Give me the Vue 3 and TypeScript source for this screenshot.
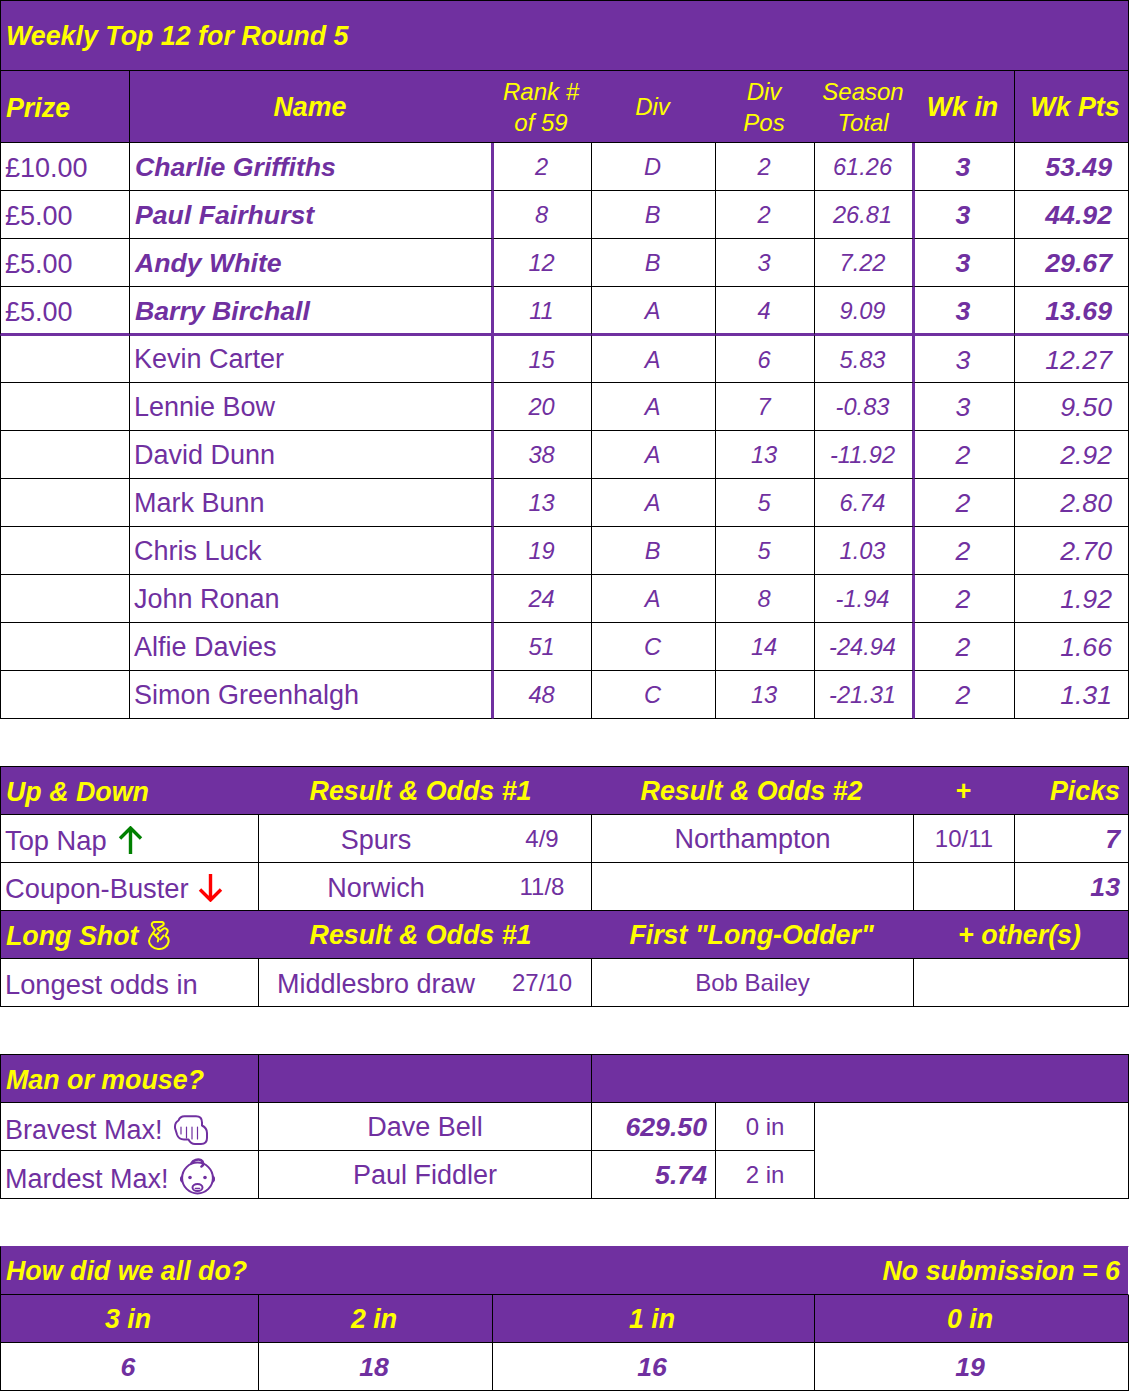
<script setup lang="ts">
interface Row { prize: string; name: string; rank: number; div: string; pos: number; total: string; wk: number; pts: string }
const rows: Row[] = [
  { prize: '£10.00', name: 'Charlie Griffiths', rank: 2, div: 'D', pos: 2, total: '61.26', wk: 3, pts: '53.49' },
  { prize: '£5.00', name: 'Paul Fairhurst', rank: 8, div: 'B', pos: 2, total: '26.81', wk: 3, pts: '44.92' },
  { prize: '£5.00', name: 'Andy White', rank: 12, div: 'B', pos: 3, total: '7.22', wk: 3, pts: '29.67' },
  { prize: '£5.00', name: 'Barry Birchall', rank: 11, div: 'A', pos: 4, total: '9.09', wk: 3, pts: '13.69' },
  { prize: '', name: 'Kevin Carter', rank: 15, div: 'A', pos: 6, total: '5.83', wk: 3, pts: '12.27' },
  { prize: '', name: 'Lennie Bow', rank: 20, div: 'A', pos: 7, total: '-0.83', wk: 3, pts: '9.50' },
  { prize: '', name: 'David Dunn', rank: 38, div: 'A', pos: 13, total: '-11.92', wk: 2, pts: '2.92' },
  { prize: '', name: 'Mark Bunn', rank: 13, div: 'A', pos: 5, total: '6.74', wk: 2, pts: '2.80' },
  { prize: '', name: 'Chris Luck', rank: 19, div: 'B', pos: 5, total: '1.03', wk: 2, pts: '2.70' },
  { prize: '', name: 'John Ronan', rank: 24, div: 'A', pos: 8, total: '-1.94', wk: 2, pts: '1.92' },
  { prize: '', name: 'Alfie Davies', rank: 51, div: 'C', pos: 14, total: '-24.94', wk: 2, pts: '1.66' },
  { prize: '', name: 'Simon Greenhalgh', rank: 48, div: 'C', pos: 13, total: '-21.31', wk: 2, pts: '1.31' },
]
const colWidths: number[] = [130, 129, 234, 99, 124, 99, 99, 101, 114]
</script>

<template>
  <table class="sheet">
    <colgroup>
      <col v-for="(w, i) in colWidths" :key="i" :style="{ width: w + 'px' }" />
    </colgroup>
    <tbody>
      <tr class="title-row first">
        <td colspan="9" class="head big left">Weekly Top 12 for Round 5</td>
      </tr>
      <tr class="column-row">
        <td class="head big left">Prize</td>
        <td colspan="2" class="head big center nb">Name</td>
        <td class="head small center nb">Rank #<br />of 59</td>
        <td class="head small center nb">Div</td>
        <td class="head small center nb">Div<br />Pos</td>
        <td class="head small center nb">Season<br />Total</td>
        <td class="head big center">Wk in</td>
        <td class="head big center shift">Wk Pts</td>
      </tr>
      <tr v-for="(r, i) in rows" :key="r.name" class="data" :class="{ prize: i < 4, divider: i === 3, 'below-divider': i === 4 }">
        <td class="plain prize-cell">{{ r.prize }}</td>
        <td colspan="2" class="plain name-cell thick">{{ r.name }}</td>
        <td class="stat after-thick">{{ r.rank }}</td>
        <td class="stat">{{ r.div }}</td>
        <td class="stat">{{ r.pos }}</td>
        <td class="stat thick">{{ r.total }}</td>
        <td class="score center after-thick">{{ r.wk }}</td>
        <td class="score pts">{{ r.pts }}</td>
      </tr>

      <tr class="gap"><td colspan="9"></td></tr>

      <tr class="first">
        <td colspan="2" class="head big left nb">Up &amp; Down</td>
        <td colspan="2" class="head big center nb r1">Result &amp; Odds #1</td>
        <td colspan="3" class="head big center nb">Result &amp; Odds #2</td>
        <td class="head big center nb">+</td>
        <td class="head big right">Picks</td>
      </tr>
      <tr>
        <td colspan="2" class="plain label">
          Top Nap
          <svg class="ico arrow up" width="25" height="28" viewBox="0 0 25 28" fill="none" stroke="#008000" stroke-width="3.4" aria-hidden="true">
            <path d="M12.5 28V2M2 12.5 12.5 2 23 12.5" />
          </svg>
        </td>
        <td class="plain center wb">Spurs</td>
        <td class="stat upright">4/9</td>
        <td colspan="3" class="plain center north">Northampton</td>
        <td class="stat upright">10/11</td>
        <td class="score right-pad">7</td>
      </tr>
      <tr>
        <td colspan="2" class="plain label">
          Coupon-Buster
          <svg class="ico arrow down" width="25" height="28" viewBox="0 0 25 28" fill="none" stroke="#ff0000" stroke-width="3.4" aria-hidden="true">
            <path d="M12.5 0V26M2 15.5 12.5 26 23 15.5" />
          </svg>
        </td>
        <td class="plain center wb">Norwich</td>
        <td class="stat upright">11/8</td>
        <td colspan="3" class="plain"></td>
        <td class="stat"></td>
        <td class="score right-pad">13</td>
      </tr>
      <tr>
        <td colspan="2" class="head big left nb">
          Long Shot
          <svg class="ico fingers" width="22" height="29" viewBox="0 0 22 29" fill="none" stroke="#ffff00" stroke-width="2" stroke-linejoin="round" stroke-linecap="round" aria-hidden="true">
            <path d="M6 1 13.5.9C16 .9 16.5 3.5 14.5 4.6L9.5 7.5 12 10.4 15 8C17 6.5 20.5 8 19.5 11L17.5 15C20 16 21 18 20.5 21 19.8 25.5 15 28.4 10 28 5 27.5 1 24 1 20 1 17 3 15 5 12L7 9 4.5 5.5C3 3.5 4 1.4 6 1Z" />
            <path d="M5 12 10.5 17.5M8 14.5 10.5 12M12.5 18.5 15.5 14.5M10.5 17.5 9.8 20.5" />
          </svg>
        </td>
        <td colspan="2" class="head big center nb r1">Result &amp; Odds #1</td>
        <td colspan="3" class="head big center nb">First "Long-Odder"</td>
        <td colspan="2" class="head big center">+ other(s)</td>
      </tr>
      <tr>
        <td colspan="2" class="plain label">Longest odds in</td>
        <td class="plain center wb">Middlesbro draw</td>
        <td class="stat upright">27/10</td>
        <td colspan="3" class="stat upright">Bob Bailey</td>
        <td colspan="2" class="stat"></td>
      </tr>

      <tr class="gap"><td colspan="9"></td></tr>

      <tr class="first">
        <td colspan="2" class="head big left">Man or mouse?</td>
        <td colspan="2" class="head"></td>
        <td colspan="5" class="head"></td>
      </tr>
      <tr>
        <td colspan="2" class="plain label brave">
          Bravest Max!
          <svg class="ico fist" width="34" height="30" viewBox="0 0 34 30" fill="none" stroke="#7030a0" stroke-width="2" stroke-linejoin="round" stroke-linecap="round" aria-hidden="true">
            <path d="M1 11.5C1 8.5 2.2 6.8 4.5 5.5 5.5 2.5 7.8 1.2 10.5 1.2H22C26 1.2 28 3.5 28 7.5V10.5C31 12 33 14.5 33 18V23C33 26.8 30.8 29 27 29H21C18 29 16 27.5 14.5 24.5H10C6.5 24.5 4 22.5 3 19.5L1 13Z" />
            <path d="M7 12V19M12.5 12V23M18 12V24M23.5 12V24" stroke-width="1.2" />
          </svg>
        </td>
        <td colspan="2" class="plain center">Dave Bell</td>
        <td class="score pts-tight">629.50</td>
        <td class="stat upright">0 in</td>
        <td colspan="3" rowspan="2" class="plain"></td>
      </tr>
      <tr>
        <td colspan="2" class="plain label mard">
          Mardest Max!
          <svg class="ico baby" width="35" height="37" viewBox="0 0 35 37" fill="none" stroke="#7030a0" stroke-width="2" stroke-linecap="round" aria-hidden="true">
            <circle cx="17.5" cy="20" r="15.4" />
            <path d="M1.8 18.5C.6 20 .6 22 2 23.5M33.2 18.5C34.4 20 34.4 22 33 23.5" />
            <path d="M11.5 5.2C13 2 18 .6 21 2.2 23.6 3.6 24 7 21.5 8.5" stroke-width="2.6" />
            <circle cx="10" cy="19.5" r="1.8" fill="#7030a0" stroke="none" />
            <circle cx="25" cy="19.5" r="1.8" fill="#7030a0" stroke="none" />
            <ellipse cx="17.5" cy="29.5" rx="5" ry="3.6" />
            <path d="M15.4 30.5H19.6" stroke-width="1.6" />
          </svg>
        </td>
        <td colspan="2" class="plain center">Paul Fiddler</td>
        <td class="score pts-tight">5.74</td>
        <td class="stat upright">2 in</td>
      </tr>

      <tr class="gap"><td colspan="9"></td></tr>

      <tr class="last-title">
        <td colspan="9" class="head big split-cell">
          <div class="split">
            <span>How did we all do?</span>
            <span>No submission = 6</span>
          </div>
        </td>
      </tr>
      <tr>
        <td colspan="2" class="head big center">3 in</td>
        <td class="head big center">2 in</td>
        <td colspan="3" class="head big center">1 in</td>
        <td colspan="3" class="head big center">0 in</td>
      </tr>
      <tr>
        <td colspan="2" class="score center">6</td>
        <td class="score center">18</td>
        <td colspan="3" class="score center">16</td>
        <td colspan="3" class="score center">19</td>
      </tr>
    </tbody>
  </table>
</template>

<style scoped>
.sheet {
  width: 1129px;
  table-layout: fixed;
  border-collapse: separate;
  border-spacing: 0;
  font-family: "Liberation Sans", Arial, sans-serif;
  color: #7030a0;
  background: #fff;
}
td {
  box-sizing: border-box;
  height: 48px;
  padding: 0;
  border-right: 1px solid #000;
  border-bottom: 1px solid #000;
  overflow: hidden;
  white-space: nowrap;
  vertical-align: middle;
}
tr > td:first-child {
  border-left: 1px solid #000;
}
.first > td {
  border-top: 1px solid #000;
  height: 49px;
}
.title-row > td {
  height: 71px;
}
.column-row > td {
  height: 72px;
}
.gap > td,
tr.gap > td:first-child {
  height: 47px;
  border: 0;
}
.head {
  background: #7030a0;
  color: #ffff00;
  font-style: italic;
}
.big {
  font-size: 26.8px;
  font-weight: 700;
  padding-top: 2px;
}
.big.left {
  padding-left: 5px;
  padding-top: 4px;
}
.title-row .big.left {
  padding-top: 2px;
}
.small {
  font-size: 24px;
  line-height: 31px;
}
.center {
  text-align: center;
  padding-right: 3px;
}
.right {
  text-align: right;
  padding-right: 8px;
}
.nb,
.wb {
  border-right: 0;
}
.shift {
  padding-left: 10px;
}
.center.r1 {
  padding-right: 10px;
}
.plain {
  font-size: 27px;
  padding-left: 3px;
  padding-top: 2px;
}
.plain.label {
  font-size: 27.3px;
  padding-left: 4px;
  padding-top: 4px;
}
.plain.label.brave {
  font-size: 27px;
  padding-top: 7px;
}
.plain.label.mard {
  font-size: 27px;
  padding-top: 3px;
}
.plain.center {
  padding: 4px 0 0;
}
.plain.center.north,
.plain.center:not(.wb) {
  padding-top: 2px;
}
.prize-cell {
  padding-left: 4px;
  padding-top: 4px;
}
.name-cell {
  padding-left: 4px;
}
.below-divider .name-cell {
  padding-top: 1px;
}
.prize .name-cell {
  font-size: 26.67px;
  padding-left: 5px;
  font-weight: 700;
  font-style: italic;
}
.stat {
  font-size: 23.6px;
  font-style: italic;
  text-align: center;
  padding-top: 2px;
  padding-right: 2px;
}
.stat.upright {
  font-style: normal;
  font-size: 24px;
  padding-top: 0;
  padding-right: 0;
}
.score {
  font-size: 26.67px;
  font-weight: 400;
  font-style: italic;
  padding-top: 2px;
}
.prize .score,
.right-pad,
.pts-tight,
.last-title ~ tr .score {
  font-weight: 700;
}
.pts {
  text-align: right;
  padding-right: 16px;
}
.right-pad,
.pts-tight {
  text-align: right;
  padding-right: 8px;
}
.thick {
  border-right: 2px solid #7030a0;
}
.after-thick {
  border-left: 1px solid #7030a0;
}
.divider > td {
  border-bottom: 2px solid #7030a0;
}
.below-divider > td {
  border-top: 1px solid #7030a0;
}
.ico {
  margin-left: 4px;
}
.arrow {
  vertical-align: -4px;
}
.arrow.down {
  margin-left: 2px;
}
.fingers {
  margin-left: 2px;
  vertical-align: -5px;
}
.fist {
  vertical-align: -6px;
}
.baby {
  vertical-align: -7px;
}
.last-title > td {
  position: relative;
  height: 49px;
  border-top: 1px solid #7030a0;
  border-right-color: #fff;
}
.last-title > td::before {
  content: "";
  position: absolute;
  left: 0;
  top: -1px;
  width: 130px;
  height: 1px;
  background: #000;
}
.split-cell {
  padding: 2px 8px 0 5px;
}
.split {
  display: flex;
  justify-content: space-between;
}
</style>
